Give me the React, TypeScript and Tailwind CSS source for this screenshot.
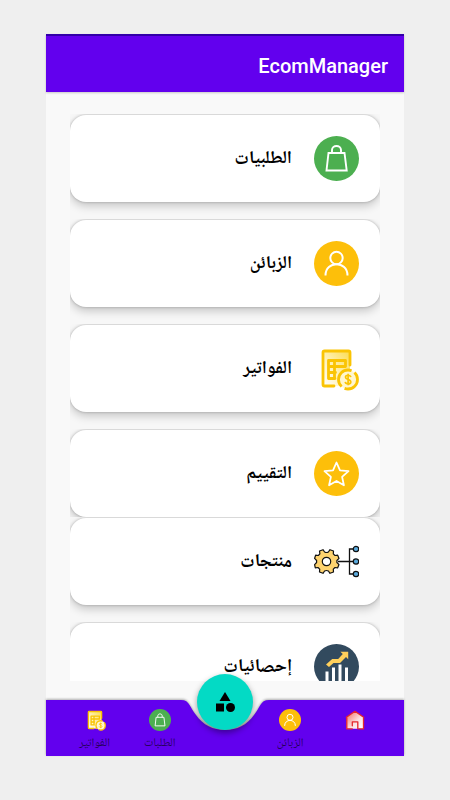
import React from 'react';

interface IconProps {
  className?: string;
}

const BagIcon: React.FC<IconProps> = ({ className }) => (
  <svg viewBox="0 0 45 45" className={className} aria-hidden="true">
    <circle cx="22.5" cy="22.5" r="22.5" fill="#4caf50" />
    <path
      d="M14.500 17h16l2.200 17.500H12.500zM18 17v-3c0-5.300 9-5.300 9 0v3"
      fill="none"
      stroke="#fff"
      strokeWidth="1.900"
    />
  </svg>
);

const UserIcon: React.FC<IconProps> = ({ className }) => (
  <svg viewBox="0 0 45 45" className={className} aria-hidden="true">
    <circle cx="22.5" cy="22.5" r="22.5" fill="#fdbf0a" />
    <g fill="none" stroke="#fff" strokeWidth="2">
      <circle cx="22.5" cy="17" r="6.200" />
      <path d="M11.500 34.500c0-15 22-15 22 0" />
    </g>
  </svg>
);

const StarIcon: React.FC<IconProps> = ({ className }) => (
  <svg viewBox="0 0 45 45" className={className} aria-hidden="true">
    <circle cx="22.5" cy="22.5" r="22.5" fill="#fdbf0a" />
    <path
      d="M22.500 11.500l3.500 7.800 8.500.9-6.400 5.700 1.800 8.400-7.400-4.300-7.400 4.300 1.800-8.400-6.400-5.700 8.500-.9z"
      fill="none"
      stroke="#fff"
      strokeWidth="1.800"
      strokeLinejoin="round"
    />
  </svg>
);

const InvoiceIcon: React.FC<IconProps> = ({ className }) => (
  <svg viewBox="0 0 45 45" className={className} aria-hidden="true">
    <defs>
      <linearGradient id="sheet" x1="1" y1="0" x2="0" y2="1">
        <stop offset="0" stopColor="#fbdc50" />
        <stop offset="0.6" stopColor="#fff3bf" />
        <stop offset="1" stopColor="#fff" />
      </linearGradient>
    </defs>
    <rect x="9" y="5" width="27" height="35" fill="url(#sheet)" />
    <g fill="none" stroke="#fac404" strokeWidth="2.800" strokeLinecap="round" strokeLinejoin="round">
      <path d="M36 19V6.500q0-1.500-1.500-1.500h-24Q9 5 9 6.500v32Q9 40 10.500 40H20" />
      <path d="M14.500 14.500h17v6h-17zM14.500 26.500h7M14.500 14.500V32.500h6.500M20.500 14.500V32.500" />
    </g>
    <circle
      cx="34"
      cy="33.500"
      r="9.500"
      fill="#fff6cf"
      stroke="#fac404"
      strokeWidth="2.800"
      strokeDasharray="26.300 3.500"
      strokeDashoffset="8"
    />
    <path
      d="M36.800 31.200c-.5-2.600-5.300-2.600-5.300 0 0 2.900 5.300 1.700 5.300 4.700 0 2.600-5.100 2.600-5.600 0M34.100 27.800v11.400"
      fill="none"
      stroke="#fac404"
      strokeWidth="1.700"
    />
  </svg>
);

const ProductsIcon: React.FC<IconProps> = ({ className }) => (
  <svg viewBox="0 0 45 45" className={className} aria-hidden="true">
    <path d="M24 22.500h18M42 10h-6.500v25H42" fill="none" stroke="#111" strokeWidth="1.300" />
    <g stroke="#111" strokeWidth="1.200">
      <path
        d="M10.600 13q1.900 1 3.800 0l1.600-2.300 3.500 1.300-.2 2.900 1.700 1.600 2.700-.3 1.300 3.200-2.100 2.100v2l2.100 2.100-1.300 3.200-2.700-.3-1.700 1.600.2 2.900-3.500 1.300-1.600-2.300q-1.900-1-3.800 0L9 34.300 5.500 33l.2-2.900L4 28.500l-2.700.3L0.600 25.600l2-2.100v-2l-2-2.100 1-3.200 2.700.3 1.600-1.600-.4-2.900L9 10.700z"
        fill="#fed36f"
        strokeLinejoin="round"
      />
      <circle cx="12.500" cy="22.500" r="4.200" fill="#fff" />
      <circle cx="42" cy="10" r="2.700" fill="#5aa9dc" />
      <circle cx="42" cy="22.500" r="2.700" fill="#5aa9dc" />
      <circle cx="42" cy="35" r="2.700" fill="#5aa9dc" />
    </g>
  </svg>
);

const StatsIcon: React.FC<IconProps> = ({ className }) => (
  <svg viewBox="0 0 45 45" className={className} aria-hidden="true">
    <circle cx="22.500" cy="22.500" r="22.500" fill="#324a5e" />
    <path d="M11.500 27.500h3V45h-3zM18 23.500h3V45h-3zM24.500 20.500h3V45h-3zM31 23.500h3V45h-3z" fill="#fff" />
    <path d="M12 20.500l3 2.500 4.500-4h6.500l6-6 2.200 2.200V7.700h-7.800l2.400 2.400-4.600 4.900h-6z" fill="#ffd05b" />
  </svg>
);

const HomeIcon: React.FC<IconProps> = ({ className }) => (
  <svg viewBox="0 0 22 22" className={className} aria-hidden="true">
    <defs>
      <linearGradient id="house" x1="0" y1="0" x2="1" y2="1">
        <stop offset="0" stopColor="#f4655f" />
        <stop offset="0.6" stopColor="#fbe3e3" />
        <stop offset="1" stopColor="#fff" />
      </linearGradient>
    </defs>
    <path d="M2.500 8.500L11 2.300l8.500 6.200v11.200h-17z" fill="url(#house)" />
    <path
      d="M15 19.800h4.500v-11M13.800 19.800v-7h-5.500v4M8.300 19.800H2.800v-11M2.300 8.300L11 2.300l8.700 6"
      fill="none"
      stroke="#e5262b"
      strokeWidth="1.300"
      strokeLinecap="round"
      strokeLinejoin="round"
    />
  </svg>
);

const ShapesIcon: React.FC<IconProps> = ({ className }) => (
  <svg viewBox="0 0 24 24" className={className} aria-hidden="true">
    <path d="M12 2l-5.500 9h11z" />
    <circle cx="17.500" cy="17.500" r="4.500" />
    <path d="M3 13.500h8v8H3z" />
  </svg>
);

const menuItems = [
  { label: 'الطلبيات', Icon: BagIcon },
  { label: 'الزبائن', Icon: UserIcon },
  { label: 'الفواتير', Icon: InvoiceIcon },
  { label: 'التقييم', Icon: StarIcon, tight: true },
  { label: 'منتجات', Icon: ProductsIcon },
  { label: 'إحصائيات', Icon: StatsIcon },
];

interface NavLinkProps {
  label?: string;
  name: string;
  Icon: React.FC<IconProps>;
}

const NavLink: React.FC<NavLinkProps> = ({ label, name, Icon }) => (
  <a href="#" aria-label={name} className="flex flex-1 flex-col items-center pt-2">
    <Icon className="size-6 p-px" />
    {label && <span className="text-xs leading-6 text-black/60">{label}</span>}
  </a>
);

const BottomBar: React.FC = () => (
  <nav className="relative h-14 shrink-0">
    {/* Bar background with the notch for the floating button */}
    <div className="absolute inset-0 flex drop-shadow-[0_-1px_1px_rgba(0,0,0,0.3)]">
      <div className="flex-1 bg-[#6200ee]" />
      <svg viewBox="0 0 88 56" className="h-14 w-[88px] fill-[#6200ee]" aria-hidden="true">
        <path d="M0 0C9 0 9 8 15 15C22 25 32 30 44 30C56 30 66 25 73 15C79 8 79 0 88 0V56H0Z" />
      </svg>
      <div className="flex-1 bg-[#6200ee]" />
    </div>
    <div className="relative flex h-full px-4">
      <NavLink name="الرئيسية" Icon={HomeIcon} />
      <NavLink name="الزبائن" label="الزبائن" Icon={UserIcon} />
      <div className="flex flex-1 justify-center">
        <button
          type="button"
          aria-label="القائمة"
          className="absolute -top-[26px] flex size-14 items-center justify-center rounded-full bg-[#03dac5] shadow-[0_3px_6px_rgba(0,0,0,0.4)]"
        >
          <ShapesIcon className="size-6" />
        </button>
      </div>
      <NavLink name="الطلبات" label="الطلبات" Icon={BagIcon} />
      <NavLink name="الفواتير" label="الفواتير" Icon={InvoiceIcon} />
    </div>
  </nav>
);

const App: React.FC = () => {
  return (
    <div
      dir="rtl"
      className="flex h-screen flex-col bg-[#efefef] px-[46px] pt-[34px] pb-11 font-[Roboto,'Noto_Naskh_Arabic_UI','Noto_Naskh_Arabic','Noto_Sans',sans-serif]"
    >
      <div className="flex min-h-0 flex-1 flex-col bg-[#f9f9f9]">
        <header className="z-10 flex h-[58px] shrink-0 items-center border-t-2 border-[#3200a8] bg-[#6200ee] px-4 pt-1 shadow-[0_1px_2px_rgba(0,0,0,0.2)]">
          <h1 className="text-xl font-medium text-white">EcomManager</h1>
        </header>

        <main className="flex min-h-0 flex-1 flex-col px-6 pt-[22px] pb-[19px]">
          <ul className="min-h-0 flex-1 overflow-hidden">
            {menuItems.map(({ label, Icon, tight }) => (
              <li key={label} className={`overflow-hidden bg-[#f7f7f7] pt-px ${tight ? 'pb-0' : 'pb-[17px]'}`}>
                <a
                  href="#"
                  className="flex h-[87px] items-center gap-[22px] rounded-2xl bg-white px-[21px] shadow-[0_4px_10px_rgba(0,0,0,0.2),0_0_3px_rgba(0,0,0,0.25)]"
                >
                  <Icon className="size-[45px]" />
                  <span className="pt-0.5 text-lg font-bold text-black">{label}</span>
                </a>
              </li>
            ))}
          </ul>
        </main>

        <BottomBar />
      </div>
    </div>
  );
};

export default App;
